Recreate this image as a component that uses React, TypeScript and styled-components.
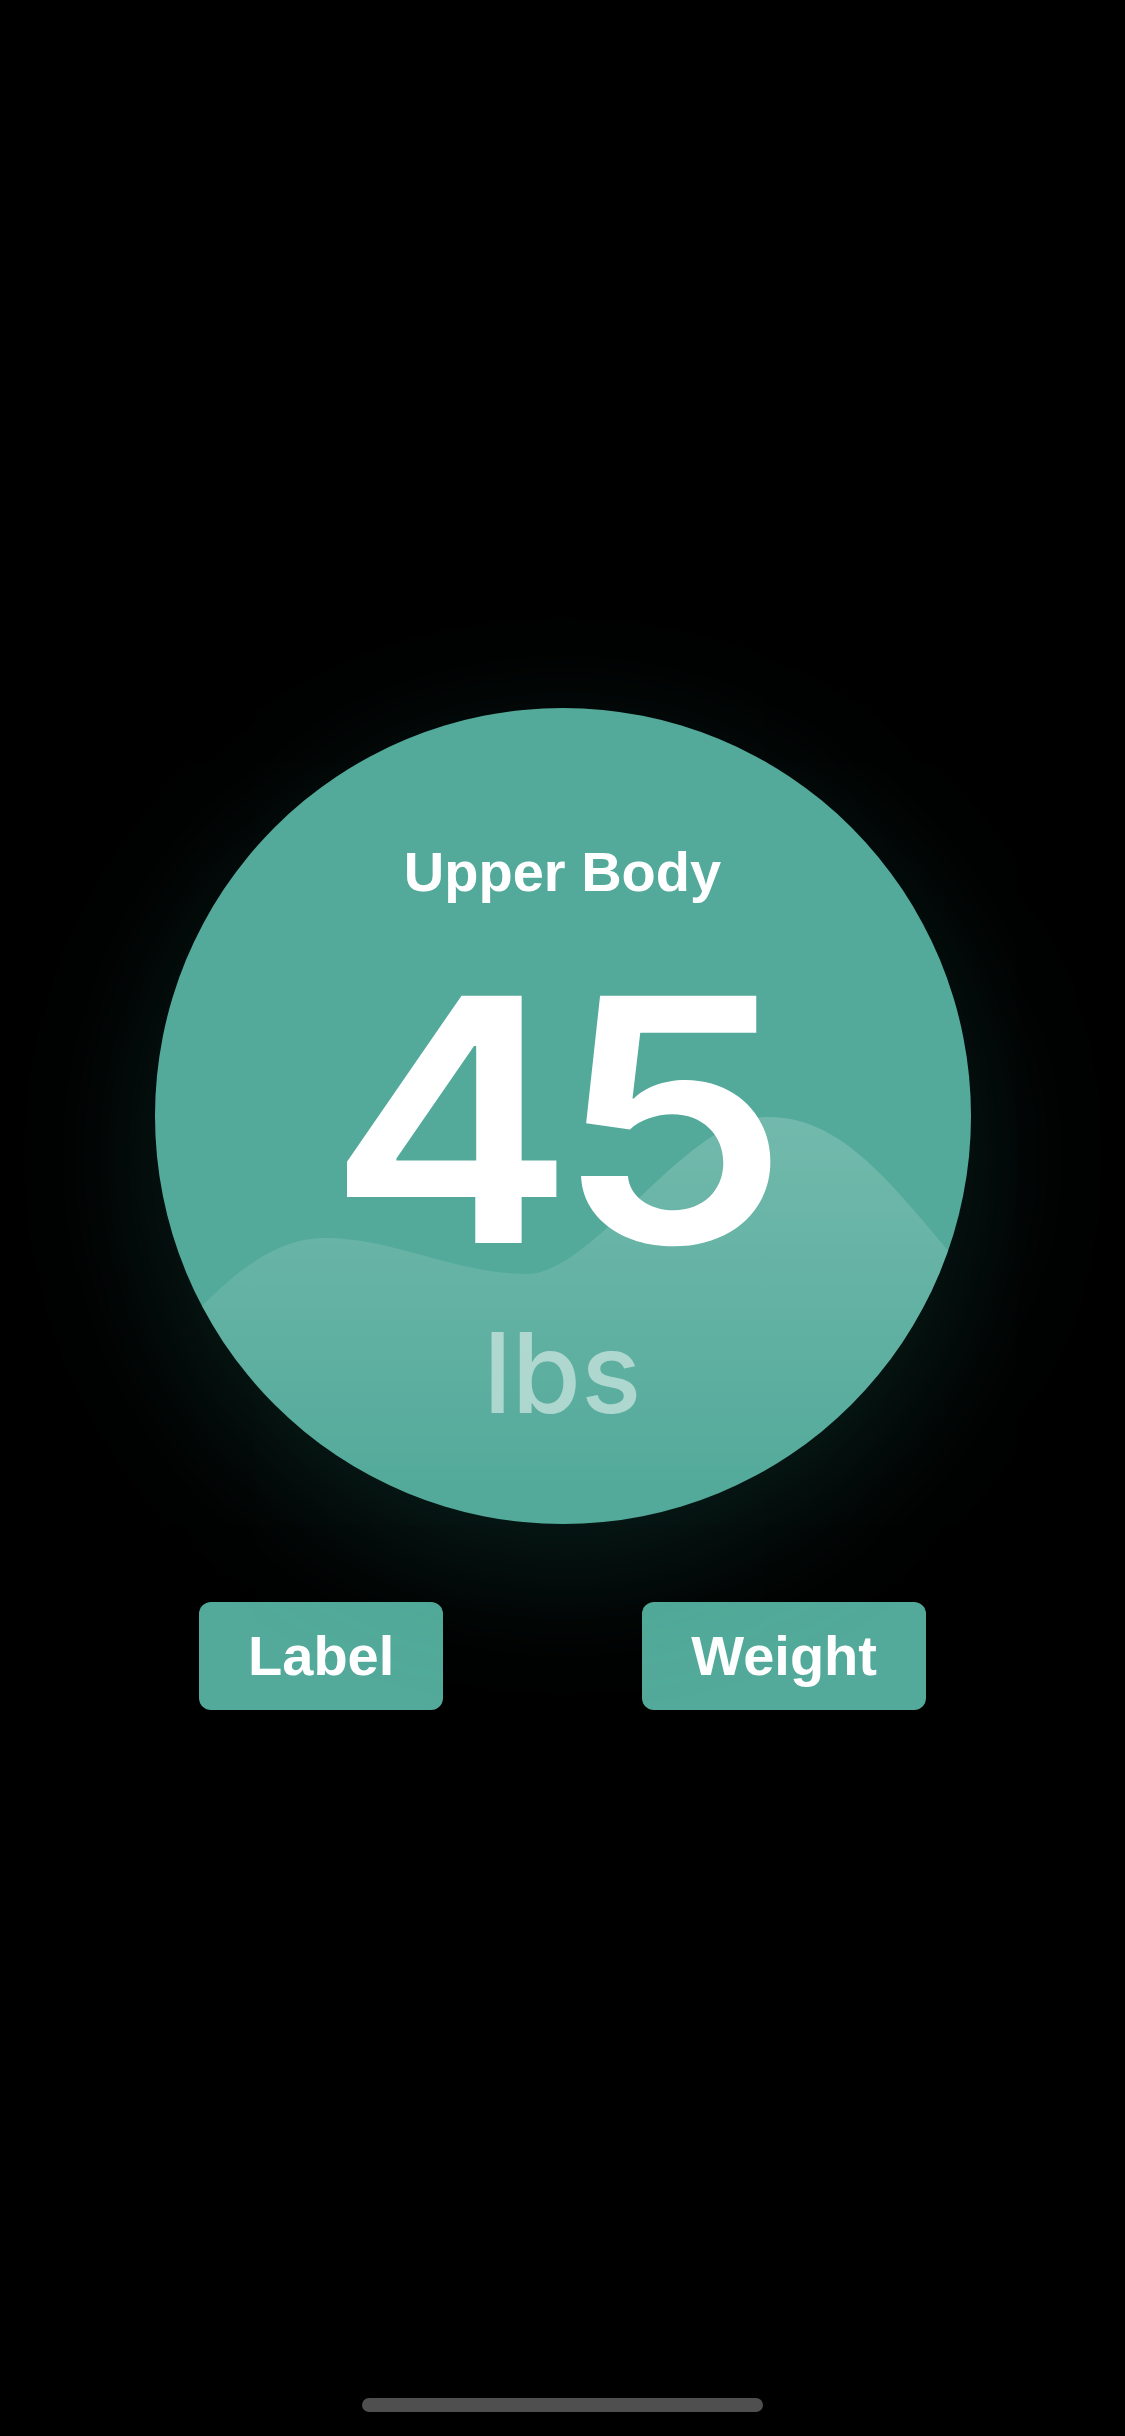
import React from "react";
import styled, { createGlobalStyle } from "styled-components";

const GlobalStyle = createGlobalStyle`
  html, body {
    margin: 0;
    padding: 0;
    background: #000000;
  }
  * { box-sizing: border-box; }
`;

const TEAL = "#53aa9a";

const Screen = styled.div`
  width: 1125px;
  height: 2436px;
  background: #000000;
  display: flex;
  flex-direction: column;
  align-items: stretch;
  padding-top: 708px;
  overflow: hidden;
`;

const Dial = styled.div`
  position: relative;
  align-self: center;
  width: 816px;
  height: 816px;
  border-radius: 50%;
  background: ${TEAL};
  overflow: hidden;
  box-shadow: 0 40px 150px rgba(40, 150, 130, 0.22);
  display: flex;
  flex-direction: column;
  align-items: center;
  padding-top: 136px;
`;

const Wave = styled.svg`
  position: absolute;
  inset: 0;
  width: 100%;
  height: 100%;
  pointer-events: none;
`;

const Title = styled.div`
  position: relative;
  font-family: "Liberation Sans", Arial, sans-serif;
  font-weight: 700;
  font-size: 56px;
  line-height: 56px;
  color: #ffffff;
`;

const Value = styled.div`
  position: relative;
  margin-top: 50px;
  padding-right: 24px;
  font-family: Inter, "Liberation Sans", sans-serif;
  font-weight: 600;
  font-size: 340px;
  line-height: 340px;
  letter-spacing: -17px;
  color: #ffffff;
  transform: scaleX(1.09);
`;

const Unit = styled.div`
  position: relative;
  margin-top: 26px;
  font-family: Inter, "Liberation Sans", sans-serif;
  font-weight: 500;
  font-size: 112px;
  line-height: 112px;
  color: rgba(255, 255, 255, 0.5);
`;

const ButtonRow = styled.div`
  margin-top: 78px;
  display: flex;
  justify-content: space-evenly;
  align-items: center;
`;

const Pill = styled.button`
  height: 108px;
  padding: 0 49px;
  border: none;
  border-radius: 12px;
  background: ${TEAL};
  color: #ffffff;
  font-family: "Liberation Sans", Arial, sans-serif;
  font-weight: 700;
  font-size: 56px;
  line-height: 1;
  display: flex;
  align-items: center;
  justify-content: center;
`;

const HomeIndicator = styled.div`
  margin-top: auto;
  margin-bottom: 24px;
  align-self: center;
  width: 401px;
  height: 14px;
  border-radius: 7px;
  background: #4f4f4f;
`;

export default function App() {
  return (
    <>
      <GlobalStyle />
      <Screen>
        <Dial>
          <Wave viewBox="0 0 816 816" preserveAspectRatio="none">
            <defs>
              <linearGradient id="waveFill" x1="0" y1="409" x2="0" y2="790" gradientUnits="userSpaceOnUse">
                <stop offset="0" stopColor="#ffffff" stopOpacity="0.18" />
                <stop offset="1" stopColor="#ffffff" stopOpacity="0" />
              </linearGradient>
            </defs>
            <path
              d="M0,650 C60,580 110,530 170,530 C240,530 300,566 372,566 C440,566 530,409 613,409 C690,409 740,480 816,570 L816,816 L0,816 Z"
              fill="url(#waveFill)"
            />
          </Wave>
          <Title>Upper Body</Title>
          <Value>45</Value>
          <Unit>lbs</Unit>
        </Dial>
        <ButtonRow>
          <Pill>Label</Pill>
          <Pill>Weight</Pill>
        </ButtonRow>
        <HomeIndicator />
      </Screen>
    </>
  );
}
